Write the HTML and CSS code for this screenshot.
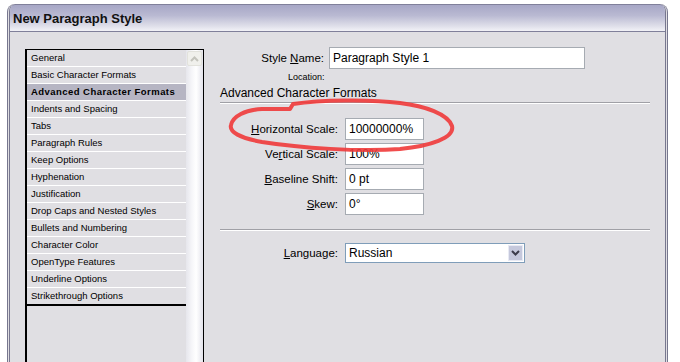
FILE: index.html
```html
<!DOCTYPE html>
<html lang="en">
<head>
    <meta charset="UTF-8">
    <title>New Paragraph Style</title>
    <link rel="stylesheet" href="styles.css">
</head>
<body>
    <div class="window">
        <div class="titlebar">New Paragraph Style</div>

        <div class="dialog-body">
            <!-- category list on the left -->
            <div class="category-list">
                <ul class="items">
                    <li>General</li>
                    <li>Basic Character Formats</li>
                    <li class="selected">Advanced Character Formats</li>
                    <li>Indents and Spacing</li>
                    <li>Tabs</li>
                    <li>Paragraph Rules</li>
                    <li>Keep Options</li>
                    <li>Hyphenation</li>
                    <li>Justification</li>
                    <li>Drop Caps and Nested Styles</li>
                    <li>Bullets and Numbering</li>
                    <li>Character Color</li>
                    <li>OpenType Features</li>
                    <li>Underline Options</li>
                    <li class="last">Strikethrough Options</li>
                </ul>
                <div class="scrollbar">
                    <div class="scroll-up">
                        <svg width="9" height="6" viewBox="0 0 9 6">
                            <path d="M1 5 L4.5 1.5 L8 5" fill="none" stroke="#c4c4bc" stroke-width="2"/>
                        </svg>
                    </div>
                </div>
            </div>

            <!-- settings pane -->
            <div class="pane">
                <div class="name-row">
                    <label class="name-label">Style <u>N</u>ame:</label>
                    <div class="textbox wide">Paragraph Style 1</div>
                </div>
                <div class="location">Location:</div>
                <div class="section-title">Advanced Character Formats</div>
                <div class="separator"></div>

                <div class="fields">
                    <div class="field-row">
                        <label><u>H</u>orizontal Scale:</label>
                        <div class="textbox">10000000%</div>
                    </div>
                    <div class="field-row">
                        <label>Ve<u>r</u>tical Scale:</label>
                        <div class="textbox">100%</div>
                    </div>
                    <div class="field-row">
                        <label><u>B</u>aseline Shift:</label>
                        <div class="textbox">0 pt</div>
                    </div>
                    <div class="field-row">
                        <label><u>S</u>kew:</label>
                        <div class="textbox">0°</div>
                    </div>
                </div>

                <div class="separator lower"></div>

                <div class="field-row language-row">
                    <label><u>L</u>anguage:</label>
                    <div class="select">
                        <span class="select-value">Russian</span>
                        <span class="select-button">
                            <svg width="9" height="6" viewBox="0 0 9 6">
                                <path d="M1 1 L4.5 4.5 L8 1" fill="none" stroke="#3c3c4c" stroke-width="2"/>
                            </svg>
                        </span>
                    </div>
                </div>
            </div>
        </div>
    </div>

    <!-- red marker scribble drawn over the dialog -->
    <svg class="scribble" width="680" height="362" viewBox="0 0 680 362">
        <path d="M293 104 C320 100, 370 99, 400 103 C425 106, 448 114, 452 126 C455 138, 430 146, 400 149 C360 152, 300 148, 262 142 C240 138, 229 132, 231 125 C233 116, 245 110, 262 109 L290 109 L293 104"
              fill="none" stroke="#f03a3a" stroke-width="4" stroke-linecap="round" stroke-linejoin="round" stroke-opacity="0.9"/>
    </svg>
</body>
</html>
```

FILE: styles.css
```css
body {
    margin: 0;
    width: 680px;
    height: 362px;
    overflow: hidden;
    background-color: #fff;
    font-family: "Liberation Sans", Arial, sans-serif;
    color: #000;
    position: relative;
}

/* dialog window */
.window {
    margin: 4px 0 0 7px;
    width: 661px;
    height: 358px;
    overflow: hidden;
    box-sizing: border-box;
    border-left: 3px double #77778f;
    border-right: 3px double #77778f;
    background-color: #e0dfe3;
    border-radius: 8px 8px 0 0;
}

.titlebar {
    height: 26px;
    margin: 0 -3px;
    padding-left: 5px;
    border: 1px solid #80809a;
    border-radius: 8px 8px 0 0;
    background: linear-gradient(#a7a7c6, #b9b9d2 40%, #dedee9 80%, #f2f2f7);
    font-size: 13px;
    font-weight: bold;
    line-height: 28px;
    color: #111;
}

.dialog-body {
    display: flex;
    padding: 15px 0 0 15px;
}

/* category list */
.category-list {
    display: flex;
    margin-top: 2px;
    height: 320px;
    border-top: 1px solid #000;
    border-left: 2px solid #000;
    border-right: 1px solid #000;
}

.items {
    list-style: none;
    margin: 0;
    padding: 0;
    width: 159px;
}

.items li {
    height: 16px;
    border-bottom: 1px solid #fff;
    padding-left: 4px;
    font-size: 9.5px;
    line-height: 16px;
    white-space: nowrap;
}

.items li.selected {
    background-color: #b6b5c3;
    font-weight: bold;
    letter-spacing: 0.45px;
}

.items li.last {
    border-bottom: 2px solid #000;
}

.scrollbar {
    width: 17px;
    background: linear-gradient(to right, #e6e6ec, #f6f6f9 35%, #fff 60%, #e3e3eb);
}

.scroll-up {
    width: 13px;
    height: 13px;
    margin: 1px 0 0 1px;
    border: 1px solid #e2e2dc;
    border-radius: 2px;
    background-color: #f0f0ec;
    display: flex;
    align-items: center;
    justify-content: center;
}

/* right pane */
.pane {
    margin-left: 16px;
    width: 430px;
}

.name-row {
    display: flex;
    align-items: center;
    gap: 5px;
}

.name-label {
    width: 104px;
    text-align: right;
    font-size: 11.5px;
}

.textbox {
    width: 74px;
    height: 20px;
    border: 1px solid #a6abb2;
    background-color: #fff;
    padding-left: 3px;
    box-sizing: content-box;
    font-size: 12px;
    line-height: 20px;
    white-space: nowrap;
}

.textbox.wide {
    width: 251px;
}

.location {
    margin-top: 3px;
    padding-left: 68px;
    font-size: 9px;
    line-height: 11px;
}

.section-title {
    margin-top: 3px;
    font-size: 12px;
    line-height: 14px;
}

.separator {
    margin-top: 2px;
    height: 1px;
    background-color: #a0a0a6;
    border-bottom: 1px solid #fff;
}

.separator.lower {
    margin-top: 14px;
}

.fields {
    margin-top: 14px;
    display: flex;
    flex-direction: column;
    gap: 3px;
}

.field-row {
    display: flex;
    align-items: center;
    gap: 7px;
}

.field-row label {
    width: 118px;
    text-align: right;
    font-size: 11.5px;
}

.language-row {
    margin-top: 12px;
}

.select {
    display: flex;
    width: 178px;
    height: 18px;
    border: 1px solid #7f9db9;
    background-color: #fff;
}

.select-value {
    flex: 1;
    padding-left: 3px;
    font-size: 12px;
    line-height: 18px;
}

.select-button {
    width: 15px;
    height: 16px;
    margin: 1px;
    border: 1px solid #e8eaf4;
    box-sizing: border-box;
    background-color: #c5c8dc;
    display: flex;
    align-items: center;
    justify-content: center;
}

/* marker scribble lies over the dialog */
.scribble {
    position: absolute;
    left: 0;
    top: 0;
    pointer-events: none;
}
```
